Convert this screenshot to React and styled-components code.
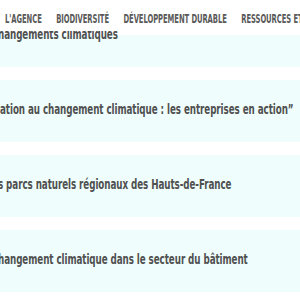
import React from "react";
import styled, { createGlobalStyle } from "styled-components";

const Global = createGlobalStyle`
  html, body { margin: 0; padding: 0; background: #ffffff; }
  body { width: 300px; height: 300px; overflow: hidden; }
`;

const FONT = `"DejaVu Sans Condensed", "Liberation Sans Narrow", "DejaVu Sans", sans-serif`;

const Page = styled.div`
  position: relative;
  width: 300px;
  height: 300px;
  overflow: hidden;
  background: #ffffff;
  font-family: ${FONT};
`;

const Header = styled.nav`
  position: absolute;
  top: 0;
  left: 0;
  right: 0;
  height: 31px;
  z-index: 2;
  background: #ffffff;
  padding: 12px 0 0 5px;
  box-sizing: border-box;
  overflow: hidden;
`;

const NavRow = styled.div`
  display: flex;
  align-items: flex-start;
  gap: 23px;
  white-space: nowrap;
  transform: scaleX(0.63);
  transform-origin: left top;
`;

const NavItem = styled.a`
  font-size: 12px;
  line-height: 14px;
  font-weight: 700;
  letter-spacing: -0.1px;
  color: #595959;
  text-transform: uppercase;
  text-decoration: none;
`;

const List = styled.div`
  display: flex;
  flex-direction: column;
  gap: 13px;
  padding-top: 5px;
`;

const Card = styled.div`
  height: 62px;
  background: ${(p) =>
    p.$under ? "linear-gradient(#ffffff 0 30px, #effefc 30px)" : "#effefc"};
  display: flex;
  align-items: center;
  overflow: hidden;
  white-space: nowrap;
`;

const Title = styled.span`
  display: inline-block;
  font-size: 14px;
  font-weight: 700;
  letter-spacing: -0.1px;
  color: #505050;
  margin-left: ${(p) => p.$shift}px;
  margin-top: -4px;
  transform: scaleX(0.695);
  transform-origin: left center;
`;

const items = [
  { text: "hangements climatiques", shift: -2, under: true },
  { text: "ation au changement climatique : les entreprises en action\u201D", shift: 0 },
  { text: "s parcs naturels régionaux des Hauts-de-France", shift: -2 },
  { text: "hangement climatique dans le secteur du bâtiment", shift: -2 },
];

export default function App() {
  return (
    <Page>
      <Global />
      <Header>
        <NavRow>
          <NavItem>L'Agence</NavItem>
          <NavItem>Biodiversité</NavItem>
          <NavItem>Développement durable</NavItem>
          <NavItem>Ressources et territoires</NavItem>
        </NavRow>
      </Header>
      <List>
        {items.map((it, i) => (
          <Card key={i} $under={it.under}>
            <Title $shift={it.shift}>{it.text}</Title>
          </Card>
        ))}
      </List>
    </Page>
  );
}
